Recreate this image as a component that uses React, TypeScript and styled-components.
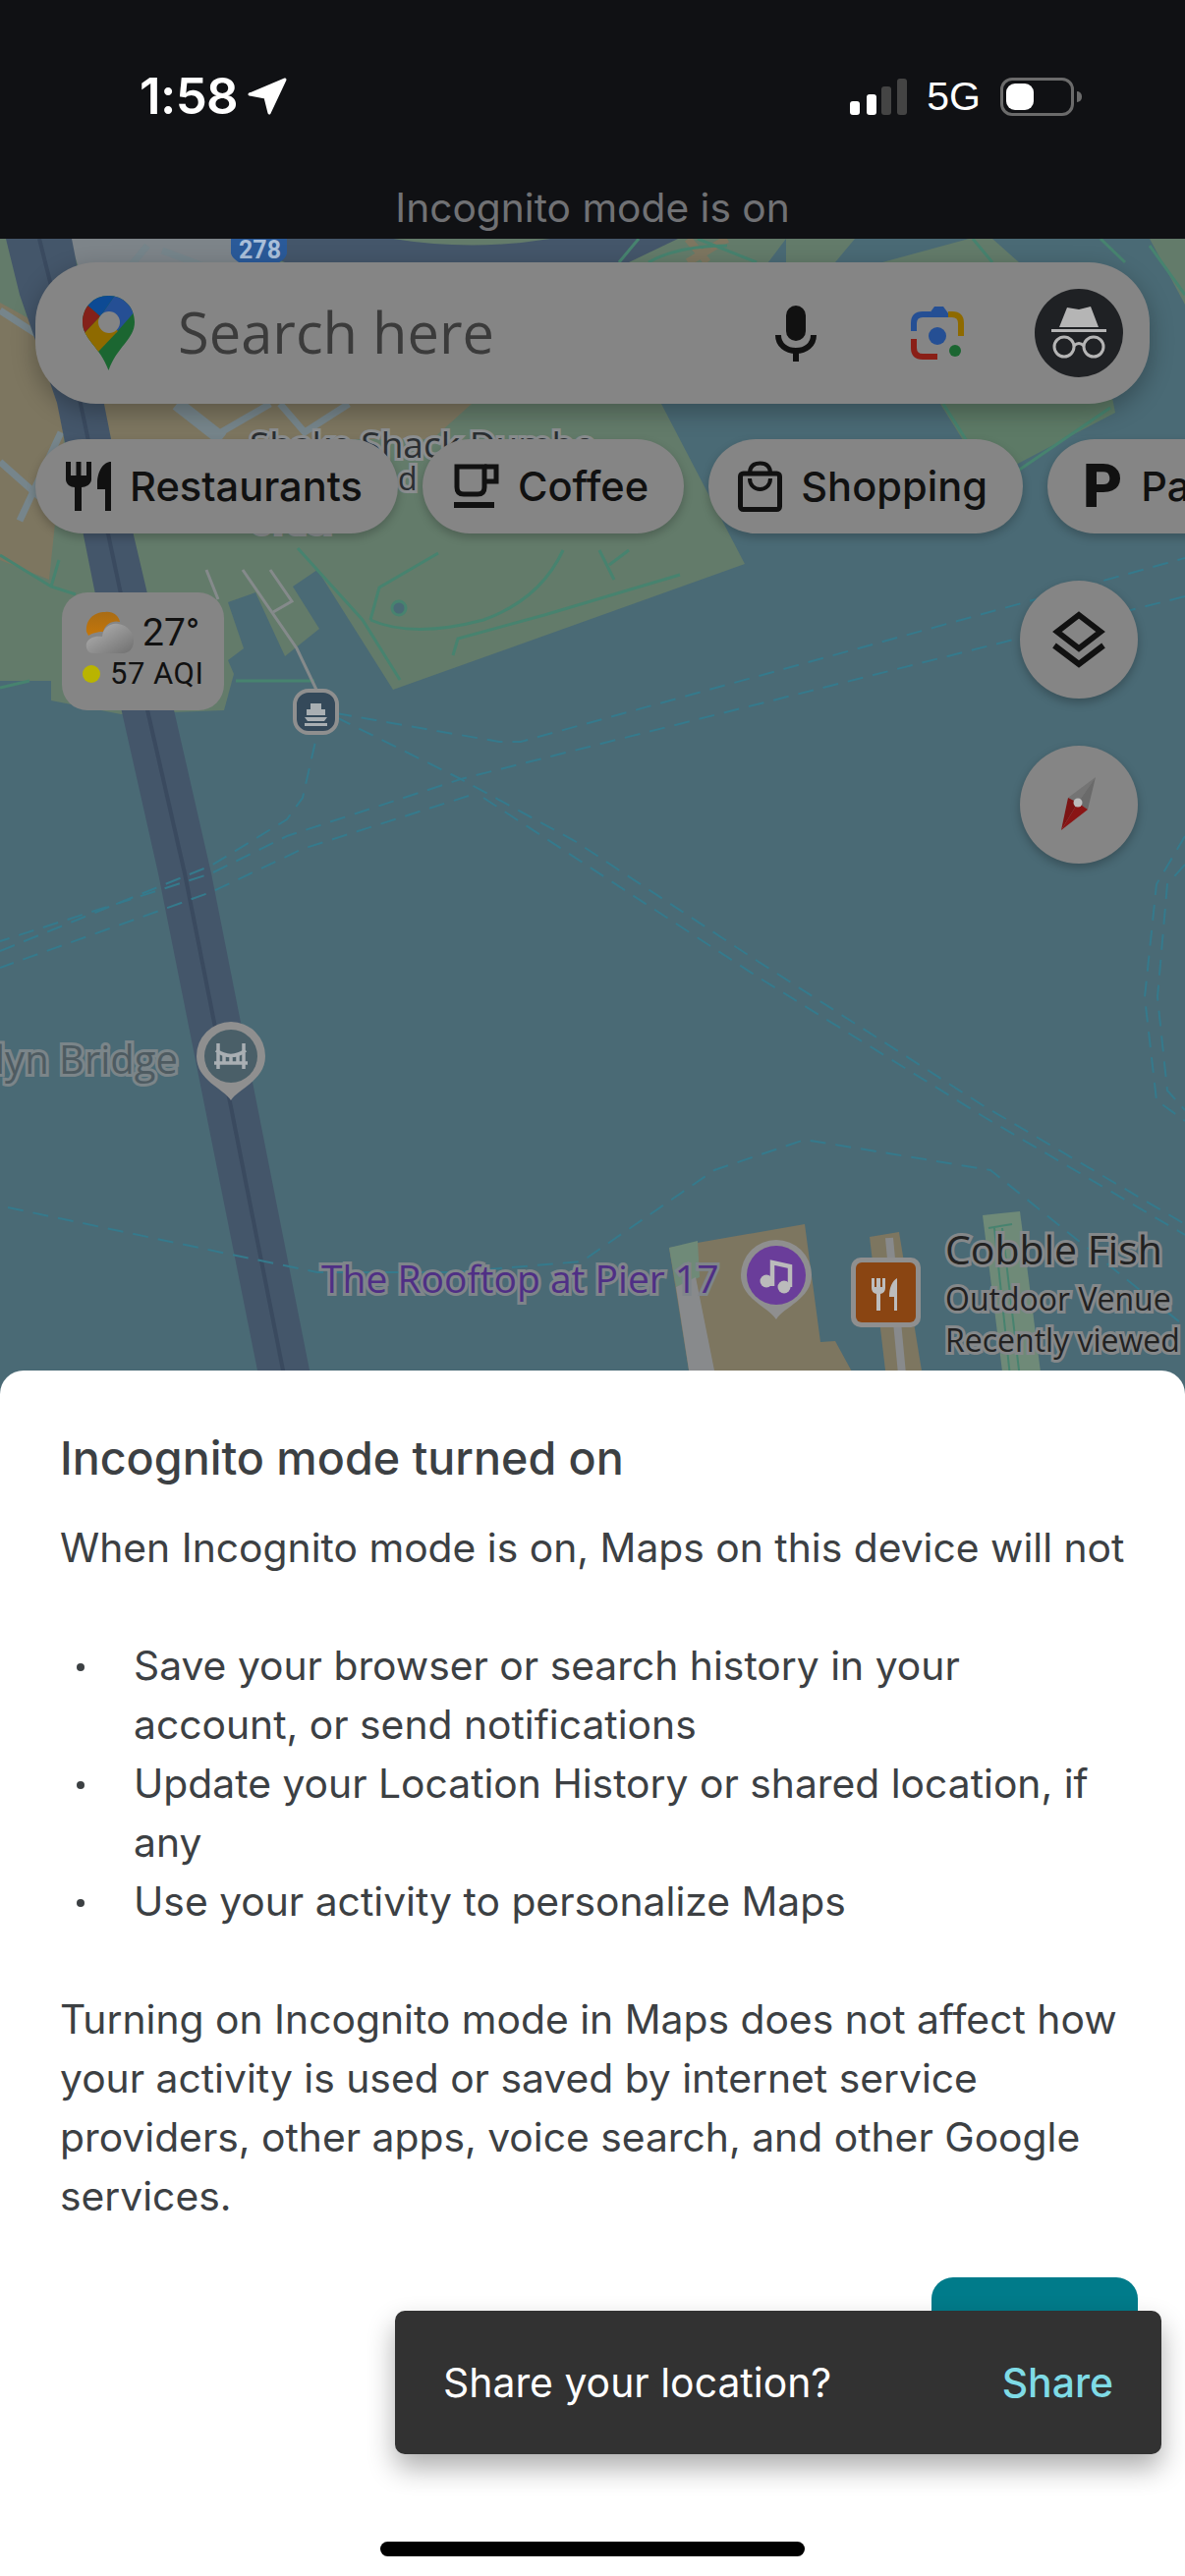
import React from "react";
import styled, { createGlobalStyle } from "styled-components";

const Global = createGlobalStyle`
  html, body { margin: 0; padding: 0; background: #fff; }
  #root { width: 1206px; height: 2622px; overflow: hidden; }
  * { box-sizing: border-box; }
`;

const Screen = styled.div`
  position: relative;
  width: 1206px;
  height: 2622px;
  display: flex;
  flex-direction: column;
  font-family: "Inter", "Roboto", sans-serif;
  background: #101114;
  overflow: hidden;
`;

/* ---------- top bar ---------- */
const TopBar = styled.header`
  height: 243px;
  flex: none;
  background: #101114;
  display: flex;
  flex-direction: column;
`;
const StatusRow = styled.div`
  height: 190px;
  padding: 72px 106px 0 142px;
  display: flex;
  justify-content: space-between;
  align-items: flex-start;
  color: #fff;
`;
const TimeGroup = styled.div`
  display: flex;
  align-items: center;
  gap: 10px;
  height: 52px;
`;
const Time = styled.span`
  font-family: "Inter", sans-serif;
  font-size: 51px;
  font-weight: 600;
  letter-spacing: -0.6px;
  line-height: 52px;
`;
const StatusRight = styled.div`
  display: flex;
  align-items: center;
  height: 52px;
  gap: 20px;
  padding-right: 7px;
`;
const Network = styled.span`
  font-family: "Liberation Sans", sans-serif;
  font-size: 41px;
  line-height: 52px;
`;
const Battery = styled.div`
  position: relative;
  width: 75px;
  height: 39px;
  border: 3px solid #6b6b6b;
  border-radius: 12px;
  padding: 3px;
  &::after {
    content: "";
    position: absolute;
    left: 75px;
    top: 11px;
    width: 5px;
    height: 11px;
    border-radius: 0 5px 5px 0;
    background: #6b6b6b;
  }
`;
const BatteryFill = styled.div`
  width: 28px;
  height: 27px;
  border-radius: 9px;
  background: #fff;
`;
const ModeLabel = styled.div`
  text-align: center;
  font-size: 40.7px;
  font-weight: 400;
  line-height: 44px;
  color: #707174;
`;

/* ---------- map ---------- */
const MapArea = styled.main`
  position: relative;
  height: 1176px;
  flex: none;
  overflow: hidden;
  background: #4a6a75;
`;
const MapDrawing = styled.svg`
  position: absolute;
  inset: 0;
  width: 1206px;
  height: 1176px;
  display: block;
`;
const MapLabel = styled.span<{ $x?: number; $r?: number; $y: number; $size: number; $color: string; $halo: string }>`
  position: absolute;
  ${(p) => (p.$x !== undefined ? `left: ${p.$x}px;` : "")}
  ${(p) => (p.$r !== undefined ? `right: ${p.$r}px;` : "")}
  top: ${(p) => p.$y}px;
  font-size: ${(p) => p.$size}px;
  line-height: 1;
  white-space: nowrap;
  font-family: "Open Sans", "Inter", sans-serif;
  color: ${(p) => p.$color};
  -webkit-text-stroke: 6px ${(p) => p.$halo};
  paint-order: stroke fill;
`;
const Shield = styled.span`
  position: absolute;
  left: 243px;
  top: 1px;
  font-family: "Roboto", sans-serif;
  font-size: 25px;
  font-weight: 700;
  line-height: 22px;
  color: #a9bfd9;
`;

const Overlay = styled.div`
  position: absolute;
  left: 36px;
  top: 24px;
  right: 0;
  display: flex;
  flex-direction: column;
  gap: 36px;
`;
const SearchBar = styled.div`
  width: 1134px;
  height: 144px;
  border-radius: 62px;
  background: #858585;
  box-shadow: 0 8px 24px rgba(0, 0, 0, 0.28);
  display: flex;
  align-items: center;
  padding: 0 27px 0 48px;
`;
const Placeholder = styled.span`
  margin-left: 44px;
  margin-top: -3px;
  flex: 1;
  font-family: "Open Sans", "Inter", sans-serif;
  font-size: 57.8px;
  line-height: 64px;
  color: #3b3b3b;
`;
const SearchIcons = styled.div`
  display: flex;
  align-items: center;
`;
const LensSlot = styled.div`
  margin-left: 96px;
  margin-right: 72px;
  display: flex;
`;
const Avatar = styled.div`
  width: 90px;
  height: 90px;
  border-radius: 50%;
  background: #1f2124;
  display: flex;
`;
const ChipRow = styled.div`
  display: flex;
  gap: 25px;
  width: 1300px;
`;
const Chip = styled.div<{ $pad: number }>`
  height: 96px;
  flex: none;
  border-radius: 48px;
  background: #858585;
  box-shadow: 0 4px 10px rgba(0, 0, 0, 0.22);
  display: flex;
  align-items: center;
  gap: 19px;
  padding: 0 36px 0 ${(p) => p.$pad}px;
`;
const ChipText = styled.span`
  font-family: "Inter", sans-serif;
  font-size: 41.6px;
  font-weight: 500;
  line-height: 48px;
  color: #111;
`;
const ParkingGlyph = styled.span`
  font-family: "Roboto", sans-serif;
  font-size: 62px;
  font-weight: 900;
  line-height: 62px;
  color: #111;
`;

const WeatherCard = styled.div`
  position: absolute;
  left: 63px;
  top: 360px;
  width: 165px;
  height: 120px;
  border-radius: 26px;
  background: #858585;
  display: flex;
  flex-direction: column;
  padding: 18px 0 0 24px;
  color: #111;
`;
const WeatherRow = styled.div`
  display: flex;
  align-items: center;
  gap: 8px;
  height: 46px;
`;
const Temp = styled.span`
  font-family: "Roboto", sans-serif;
  font-size: 39px;
  line-height: 46px;
`;
const AqiRow = styled.div`
  display: flex;
  align-items: center;
  gap: 10px;
  height: 38px;
  margin-left: -3px;
`;
const AqiDot = styled.span`
  width: 18px;
  height: 18px;
  border-radius: 50%;
  background: #b9b400;
`;
const AqiText = styled.span`
  font-family: "Roboto", sans-serif;
  font-size: 31px;
  letter-spacing: 0.5px;
  line-height: 38px;
`;

const Fab = styled.div<{ $y: number }>`
  position: absolute;
  left: 1038px;
  top: ${(p) => p.$y}px;
  width: 120px;
  height: 120px;
  border-radius: 50%;
  background: #858585;
  box-shadow: 0 4px 10px rgba(0, 0, 0, 0.25);
  display: flex;
  align-items: center;
  justify-content: center;
`;

/* ---------- sheet ---------- */
const Sheet = styled.section`
  position: relative;
  flex: 1;
  margin-top: -24px;
  background: #fff;
  border-radius: 24px 24px 0 0;
  padding: 57px 48px 0 61px;
  display: flex;
  flex-direction: column;
  color: #3c4043;
  font-family: "Inter", sans-serif;
  font-size: 40.8px;
  line-height: 60px;
`;
const SheetTitle = styled.h1`
  margin: 0 0 29px;
  font-size: 46.6px;
  font-weight: 500;
  line-height: 64px;
`;
const Para = styled.p`
  margin: 0;
`;
const BulletList = styled.ul`
  margin: 60px 0;
  padding: 0 28px 0 75px;
  list-style: none;
`;
const Bullet = styled.li`
  position: relative;
  &::before {
    content: "";
    position: absolute;
    left: -58px;
    top: 28px;
    width: 8px;
    height: 8px;
    border-radius: 50%;
    background: #3c4043;
  }
`;
const ActionRow = styled.div`
  margin-top: 53px;
  display: flex;
  justify-content: flex-end;
`;
const PrimaryButton = styled.div`
  width: 210px;
  height: 90px;
  border-radius: 22px;
  background: #007b8a;
`;
const HomeIndicator = styled.div`
  position: absolute;
  left: 387px;
  bottom: 20px;
  width: 432px;
  height: 15px;
  border-radius: 8px;
  background: #000;
`;
const Toast = styled.div`
  position: absolute;
  left: 402px;
  top: 957px;
  width: 780px;
  height: 146px;
  border-radius: 10px;
  background: #323232;
  box-shadow: 0 14px 28px rgba(0, 0, 0, 0.32);
  display: flex;
  align-items: center;
  justify-content: space-between;
  padding: 0 49px;
  font-size: 40.9px;
  color: #fff;
`;
const ToastAction = styled.span`
  color: #7fdbe6;
  font-weight: 500;
`;

/* ---------- icons ---------- */
const MapsPin = () => (
  <svg width="53" height="76" viewBox="0 0 53 76">
    <defs>
      <clipPath id="pinClip">
        <path d="M26.5 0C11 0 0 12 0 27c0 17 18 25 26.5 49C35 52 53 44 53 27 53 12 42 0 26.5 0Z" />
      </clipPath>
    </defs>
    <g clipPath="url(#pinClip)">
      <rect width="53" height="76" fill="#1b6631" />
      <polygon points="34,-2 60,-2 55,14 34,38 18,21" fill="#254f94" />
      <polygon points="34,-2 18,21 3,8 3,-2" fill="#0d4a94" />
      <polygon points="-2,6 3,8 18,21 2,38 -2,40" fill="#84211a" />
      <polygon points="2,38 18,21 36,36 16,57 -2,50" fill="#8e6a00" />
    </g>
    <circle cx="27" cy="27" r="11" fill="#858585" />
  </svg>
);

const Mic = () => (
  <svg width="42" height="57" viewBox="0 0 42 57">
    <rect x="11" y="0" width="20" height="36" rx="10" fill="#111" />
    <path d="M3 30C3 40 11 46 21 46 31 46 39 40 39 30" fill="none" stroke="#111" strokeWidth="6" />
    <rect x="18" y="45" width="6" height="12" fill="#111" />
  </svg>
);

const Lens = () => (
  <svg width="54" height="54" viewBox="0 0 54 54">
    <path d="M3 25V17Q3 8 12 8H20" fill="none" stroke="#254f94" strokeWidth="6" />
    <polygon points="16,11 24,0 33,0 41,11" fill="#254f94" />
    <path d="M38 8H42Q51 8 51 17V30" fill="none" stroke="#8e6a00" strokeWidth="6" />
    <path d="M3 33V42Q3 51 12 51H27" fill="none" stroke="#8a1f17" strokeWidth="6" />
    <circle cx="27" cy="30" r="9" fill="#254f94" />
    <circle cx="45" cy="45" r="6" fill="#1b6631" />
  </svg>
);

const Incognito = () => (
  <svg width="90" height="90" viewBox="0 0 90 90">
    <path d="M25 39L33 19 45 21 57 18 65 39Z" fill="#b5b5b5" />
    <rect x="17" y="41" width="56" height="3" fill="#b5b5b5" />
    <circle cx="30" cy="59" r="10" fill="none" stroke="#b5b5b5" strokeWidth="3" />
    <circle cx="60" cy="59" r="10" fill="none" stroke="#b5b5b5" strokeWidth="3" />
    <path d="M40 58Q45 53 50 58" fill="none" stroke="#b5b5b5" strokeWidth="3" />
  </svg>
);

const Fork = () => (
  <svg width="46" height="50" viewBox="0 0 46 50">
    <path d="M0 0V18C0 23 5 26 9 26V50H16V26C20 26 26 23 26 18V0H21V14H15.5V0H10.5V14H5V0Z" fill="#111" />
    <path d="M46 0C38 0 32 10 32 22V28H40V50H46Z" fill="#111" />
  </svg>
);
const Cup = () => (
  <svg width="46" height="46" viewBox="0 0 46 46">
    <path d="M3 3H31V24Q31 31 24 31H10Q3 31 3 24Z" fill="none" stroke="#111" strokeWidth="5" />
    <path d="M31 3H43V18H31" fill="none" stroke="#111" strokeWidth="5" />
    <rect x="0" y="39" width="41" height="6" fill="#111" />
  </svg>
);
const Bag = () => (
  <svg width="45" height="52" viewBox="0 0 45 52">
    <rect x="2.5" y="13" width="40" height="36.5" rx="3" fill="none" stroke="#111" strokeWidth="5" />
    <path d="M12 13C12 5 17 2.5 22.5 2.5S33 5 33 13" fill="none" stroke="#111" strokeWidth="4" />
    <path d="M12 18C12 25 17 29 22.5 29S33 25 33 18" fill="none" stroke="#111" strokeWidth="4" />
  </svg>
);
const Arrow = () => (
  <svg width="40" height="38" viewBox="0 0 40 38">
    <path d="M38 2L22 36 18 20 2 17Z" fill="#fff" stroke="#fff" strokeWidth="3" strokeLinejoin="round" />
  </svg>
);
const Signal = () => (
  <svg width="58" height="37" viewBox="0 0 58 37">
    <rect x="0" y="23" width="10" height="14" rx="3" fill="#fff" />
    <rect x="17" y="16" width="10" height="21" rx="3" fill="#fff" />
    <rect x="32" y="8" width="10" height="29" rx="3" fill="#444" />
    <rect x="48" y="0" width="10" height="37" rx="3" fill="#444" />
  </svg>
);
const Layers = () => (
  <svg width="60" height="60" viewBox="0 0 60 60">
    <path d="M30 5L52 22 30 39 8 22Z" fill="none" stroke="#111" strokeWidth="6" />
    <path d="M5 36L30 55 55 36" fill="none" stroke="#111" strokeWidth="6" />
  </svg>
);
const Compass = () => (
  <svg width="120" height="120" viewBox="1038 759 120 120">
    <polygon points="1115,791 1087,812 1097,817" fill="#747474" />
    <polygon points="1115,791 1097,817 1107,824" fill="#6a6a6a" />
    <polygon points="1080,845 1087,812 1097,817" fill="#7c1414" />
    <polygon points="1080,845 1097,817 1107,824" fill="#8a1515" />
    <circle cx="1097" cy="817" r="4.5" fill="#bcbcbc" />
  </svg>
);
const WeatherIcon = () => (
  <svg width="50" height="46" viewBox="0 0 50 46">
    <defs>
      <linearGradient id="cloudGrad" x1="0" y1="0" x2="1" y2="1">
        <stop offset="0" stopColor="#b5b5b5" />
        <stop offset="1" stopColor="#6f6f6f" />
      </linearGradient>
      <linearGradient id="sunGrad" x1="0" y1="0" x2="0" y2="1">
        <stop offset="0" stopColor="#a96c14" />
        <stop offset="1" stopColor="#c4760a" />
      </linearGradient>
    </defs>
    <path d="M1 22C0 10 8 2 20 2 28 1 34 6 35 12 28 10 20 14 18 22 12 22 6 24 3 26Z" fill="url(#sunGrad)" />
    <path d="M8 44C2 44 0 38 1 34 3 28 10 26 17 27 18 18 25 13 33 14 43 15 50 24 49 32 49 39 44 44 38 44Z" fill="url(#cloudGrad)" />
  </svg>
);

const waterLine = "#357a8c";
const parkLine = "#47836f";

const MapSvg = () => (
  <MapDrawing viewBox="0 243 1206 1176">
    {/* land */}
    <polygon
      points="0,243 800,243 673,411 758,574 400,702 323,580 298,597 325,640 290,668 260,603 232,613 248,660 232,672 238,686 228,723 123,727 52,713 52,693 0,693"
      fill="#637b6a"
    />
    <polygon points="950,400 1000,480 1030,475 1135,420 1130,395" fill="#5d7a66" />
    <polygon points="800,243 870,243 850,267 800,290" fill="#637b6a" />
    <polygon points="898,267 986,243 1010,243 1037,267" fill="#637b6a" />
    <polygon points="1170,243 1206,243 1206,310" fill="#637b6a" />
    <polygon points="0,308 40,330 60,411 65,447 50,590 0,570" fill="#7d7660" />
    <polygon points="105,411 480,411 440,447 113,447" fill="#7d7660" />
    <polygon points="70,243 240,243 300,275 200,330 100,330" fill="#7d8489" />
    {/* roads */}
    <g fill="none" stroke="#76858b" strokeWidth="7">
      <path d="M0 316L45 345" />
      <path d="M0 470L45 510" />
      <path d="M62 440L20 530" />
      <path d="M225 440L275 411" />
      <path d="M285 411L310 440 355 411" />
      <path d="M150 250L125 280M165 255L205 270" />
    </g>
    <path d="M180 411L226 447" fill="none" stroke="#76858b" strokeWidth="14" />
    <path d="M235 243L290 267H640L690 243Z" fill="#44566a" />
    <path d="M400 243Q480 256 560 243Z" fill="#637b6a" />
    <path d="M740 243L700 267M700 243L720 267" stroke="#7d7660" strokeWidth="8" fill="none" />
    {/* bridge */}
    <polygon points="6,243 73,243 113,447 149,600 215,889 320,1420 267,1420 161,889 96,600 58,410 20,300" fill="#44566a" />
    <path d="M40 243L82 411 122 600 188 889 293 1420" fill="none" stroke="#3a4a5f" strokeWidth="4" />
    {/* shield */}
    <path d="M235 243H292V258C290 268 272 272 264 274 255 272 238 268 235 258Z" fill="#2a5a99" />
    {/* park paths */}
    <g fill="none" stroke={parkLine} strokeWidth="3">
      <path d="M0 565L52 597 77 605" />
      <path d="M60 570L52 597" />
      <path d="M303 558L369 631 407 692" />
      <path d="M377 631L386 598 446 563" />
      <path d="M377 631Q420 650 492 631 550 610 573 560" />
      <path d="M461 667L466 650 554 626 692 585" />
      <path d="M320 693H240" />
      <path d="M610 560L625 590M640 560L620 575" />
      <path d="M710 243L770 267" />
      <path d="M630 267L650 243M660 267Q690 250 740 250" />
      <path d="M960 411L1010 490M1020 490L1130 415" />
      <path d="M1120 243L1145 267M990 243L1010 267" />
      <path d="M1170 250L1206 300" />
      <path d="M0 700L30 693" />
    </g>
    <circle cx="406" cy="619" r="7" fill="#4a6a75" stroke={parkLine} strokeWidth="3" />
    {/* foot paths */}
    <g fill="none" stroke="#858a8b" strokeWidth="3">
      <path d="M210 580L222 610" />
      <path d="M247 580L302 660 322 702" />
      <path d="M275 580L297 612 278 623" />
    </g>
    {/* ferry lines */}
    <g fill="none" stroke={waterLine} strokeWidth="2" strokeDasharray="16 10">
      <path d="M342 726L508 755H530L1206 568" />
      <path d="M1206 607L469 793 292 851 215 889 0 958" />
      <path d="M477 810L308 864 215 908 0 985" />
      <path d="M0 968L215 881 292 834 308 812 323 746" />
      <path d="M342 730L469 793 585 856 769 977 1000 1125 1206 1246" />
      <path d="M492 812L769 993 1000 1136 1206 1257" />
      <path d="M8 1229L231 1276 323 1295 462 1295 592 1284 727 1191 819 1160 1008 1191 1206 1350" />
      <path d="M1206 851L1177 900 1165 1015 1177 1120 1206 1141" />
      <path d="M1206 880L1188 900 1178 1015 1188 1110 1206 1130" />
    </g>
    {/* piers */}
    <polygon points="681,1270 819,1246 835,1366 850,1365 880,1420 705,1420" fill="#7d7660" />
    <polygon points="681,1270 710,1263 712,1300 688,1310" fill="#6f8a78" />
    <polygon points="688,1310 708,1300 732,1420 705,1420" fill="#888a8c" />
    <polygon points="885,1259 915,1254 942,1420 904,1420" fill="#7d7660" />
    <path d="M905 1260L920 1420" stroke="#888a8c" strokeWidth="8" />
    <polygon points="1000,1237 1038,1233 1062,1420 1023,1420" fill="#6f8a78" />
    <path d="M1006 1250L1030 1246M1012 1250L1030 1420M1020 1250L1040 1420" stroke={parkLine} strokeWidth="2" fill="none" />
    {/* ferry terminal */}
    <rect x="300" y="703" width="43" height="43" rx="14" fill="#34495a" stroke="#8f8f8f" strokeWidth="4" />
    <path d="M316 716H327V722H331V728H312V722H316ZM310 730H333L330 734H313ZM310 736H333V739H310Z" fill="#a9afb3" />
    {/* bridge pin */}
    <path d="M235 1120C228 1108 200 1100 200 1075A35 35 0 0 1 270 1075C270 1100 242 1108 235 1120Z" fill="#8f8f8f" />
    <circle cx="235" cy="1075" r="27" fill="#4a5f68" />
    <path d="M222 1062V1088M248 1062V1088M218 1082H252M220 1069Q235 1080 250 1069M228 1072V1082M235 1075V1082M242 1072V1082" fill="none" stroke="#a9afb3" strokeWidth="3.5" />
    {/* music pin */}
    <path d="M790 1343C782 1330 754 1322 754 1298A36 36 0 0 1 826 1298C826 1322 798 1330 790 1343Z" fill="#8f8f8f" />
    <circle cx="790" cy="1298" r="30" fill="#6a3d9a" />
    <path d="M786 1309V1285L804 1289V1310" fill="none" stroke="#bbb" strokeWidth="4.5" />
    <circle cx="780" cy="1304" r="6.5" fill="#bbb" />
    <circle cx="798" cy="1310" r="6.5" fill="#bbb" />
    {/* restaurant marker */}
    <rect x="866" y="1280" width="71" height="71" rx="10" fill="#8f8f8f" />
    <rect x="871" y="1285" width="61" height="61" rx="6" fill="#8a4512" />
    <path d="M887 1301V1311Q887 1316 892 1317V1334H896V1317Q901 1316 901 1311V1301H898V1310H896V1301H892V1310H890V1301Z" fill="#bdbdbd" />
    <path d="M913 1301C908 1304 905 1310 905 1320H910V1334H913Z" fill="#bdbdbd" />
  </MapDrawing>
);

export default function App() {
  return (
    <Screen>
      <Global />
      <TopBar>
        <StatusRow>
          <TimeGroup>
            <Time>1:58</Time>
            <Arrow />
          </TimeGroup>
          <StatusRight>
            <Signal />
            <Network>5G</Network>
            <Battery>
              <BatteryFill />
            </Battery>
          </StatusRight>
        </StatusRow>
        <ModeLabel>Incognito mode is on</ModeLabel>
      </TopBar>

      <MapArea>
        <MapSvg />
        <Shield>278</Shield>
        <MapLabel $x={254} $y={190} $size={37} $color="#2b2f32" $halo="#8b8e90">
          Shake Shack Dumbo
        </MapLabel>
        <MapLabel $x={405} $y={228} $size={32} $color="#2b2f32" $halo="#8b8e90">
          d
        </MapLabel>
        <MapLabel $x={254} $y={272} $size={32} $color="#2b2f32" $halo="#8b8e90">
          Order
        </MapLabel>
        <MapLabel $r={1025} $y={815} $size={40} $color="#4e5b61" $halo="#7b8589">
          Brooklyn Bridge
        </MapLabel>
        <MapLabel $x={327} $y={1038} $size={39} $color="#4f2f85" $halo="#7f858a">
          The Rooftop at Pier 17
        </MapLabel>
        <MapLabel $x={962} $y={1008} $size={41} $color="#222" $halo="#85888a">
          Cobble Fish
        </MapLabel>
        <MapLabel $x={962} $y={1063} $size={32} $color="#222" $halo="#85888a">
          Outdoor Venue
        </MapLabel>
        <MapLabel $x={962} $y={1105} $size={32} $color="#222" $halo="#85888a">
          Recently viewed
        </MapLabel>

        <WeatherCard>
          <WeatherRow>
            <WeatherIcon />
            <Temp>27°</Temp>
          </WeatherRow>
          <AqiRow>
            <AqiDot />
            <AqiText>57 AQI</AqiText>
          </AqiRow>
        </WeatherCard>
        <Fab $y={348}>
          <Layers />
        </Fab>
        <Fab $y={516}>
          <Compass />
        </Fab>

        <Overlay>
          <SearchBar>
            <MapsPin />
            <Placeholder>Search here</Placeholder>
            <SearchIcons>
              <Mic />
              <LensSlot>
                <Lens />
              </LensSlot>
              <Avatar>
                <Incognito />
              </Avatar>
            </SearchIcons>
          </SearchBar>
          <ChipRow>
            <Chip $pad={31}>
              <Fork />
              <ChipText>Restaurants</ChipText>
            </Chip>
            <Chip $pad={32}>
              <Cup />
              <ChipText>Coffee</ChipText>
            </Chip>
            <Chip $pad={30}>
              <Bag />
              <ChipText>Shopping</ChipText>
            </Chip>
            <Chip $pad={36}>
              <ParkingGlyph>P</ParkingGlyph>
              <ChipText>Parking</ChipText>
            </Chip>
          </ChipRow>
        </Overlay>
      </MapArea>

      <Sheet>
        <SheetTitle>Incognito mode turned on</SheetTitle>
        <Para>When Incognito mode is on, Maps on this device will not</Para>
        <BulletList>
          <Bullet>Save your browser or search history in your account, or send notifications</Bullet>
          <Bullet>Update your Location History or shared location, if any</Bullet>
          <Bullet>Use your activity to personalize Maps</Bullet>
        </BulletList>
        <Para>
          Turning on Incognito mode in Maps does not affect how your activity is used or saved by internet
          service providers, other apps, voice search, and other Google services.
        </Para>
        <ActionRow>
          <PrimaryButton />
        </ActionRow>
        <Toast>
          <span>Share your location?</span>
          <ToastAction>Share</ToastAction>
        </Toast>
        <HomeIndicator />
      </Sheet>
    </Screen>
  );
}
